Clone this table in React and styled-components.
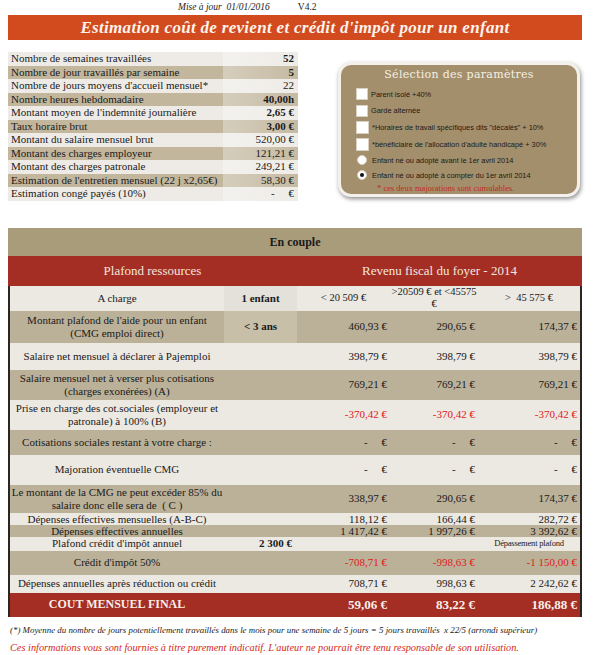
import React from "react";
import styled, { createGlobalStyle } from "styled-components";

const GlobalStyle = createGlobalStyle`
  body {
    margin: 0;
    background: #fff;
    font-family: "Liberation Serif", "Times New Roman", serif;
    color: #1a1a1a;
  }
`;

const leftRows = [
  ["Nombre de semaines travaillées", "52", true],
  ["Nombre de jour travaillés par semaine", "5", true],
  ["Nombre de jours moyens d'accueil mensuel*", "22"],
  ["Nombre heures hebdomadaire", "40,00h", true],
  ["Montant moyen de l'indemnité journalière", "2,65 €", true],
  ["Taux horaire brut", "3,00 €", true],
  ["Montant du salaire mensuel brut", "520,00 €"],
  ["Montant des charges employeur", "121,21 €"],
  ["Montant des charges patronale", "249,21 €"],
  ["Estimation de l'entretien mensuel (22 j x2,65€)", "58,30 €"],
  ["Estimation congé payés (10%)", "-     €"],
];

const options = [
  { type: "box", label: "Parent isolé +40%" },
  { type: "box", label: "Garde alternée" },
  { type: "box", label: "*Horaires de travail spécifiques dits \"décalés\" + 10%", big: true },
  { type: "box", label: "*bénéficiaire de l'allocation d'adulte handicapé + 30%", big: true },
  { type: "radio", label: "Enfant né ou adopté avant le 1er avril 2014" },
  { type: "radio", label: "Enfant né ou adopté à compter du 1er avril 2014", checked: true },
];

const dash = "-     €";

const rows = [
  { h: 32, tone: "tan", label: <>Montant plafond de l'aide pour un enfant<br />(CMG emploi direct)</>, extra: "< 3 ans", hl: true, values: ["460,93 €", "290,65 €", "174,37 €"] },
  { h: 27, tone: "light", label: "Salaire net mensuel à déclarer à Pajemploi", values: ["398,79 €", "398,79 €", "398,79 €"] },
  { h: 30, tone: "tan", label: <>Salaire mensuel net à verser plus cotisations<br />(charges exonérées) (A)</>, values: ["769,21 €", "769,21 €", "769,21 €"] },
  { h: 30, tone: "light", label: <>Prise en charge des cot.sociales (employeur et<br />patronale) à 100% (B)</>, values: ["-370,42 €", "-370,42 €", "-370,42 €"], red: true },
  { h: 25, tone: "tan", label: "Cotisations sociales restant à votre charge :", values: [dash, dash, dash] },
  { h: 30, tone: "light", label: "Majoration éventuelle CMG", values: [dash, dash, dash] },
  { h: 28, tone: "tan", label: <>Le montant de la CMG ne peut excéder 85% du<br />salaire donc elle sera de &nbsp;( C )</>, values: ["338,97 €", "290,65 €", "174,37 €"] },
  { h: 12, tone: "light", label: "Dépenses effectives mensuelles (A-B-C)", values: ["118,12 €", "166,44 €", "282,72 €"] },
  { h: 12, tone: "tan", label: "Dépenses effectives annuelles", values: ["1 417,42 €", "1 997,26 €", "3 392,62 €"] },
  { h: 14, tone: "light", label: "Plafond crédit d'impôt annuel", extra: "2 300 €", extraRight: true, values: ["", "", ""], note: "Dépassement plafond" },
  { h: 24, tone: "tan", label: "Crédit d'impôt 50%", values: ["-708,71 €", "-998,63 €", "-1 150,00 €"], red: true },
  { h: 18, tone: "light", label: "Dépenses annuelles après réduction ou crédit", values: ["708,71 €", "998,63 €", "2 242,62 €"] },
];

const App = () => {
  return (
    <Page>
      <GlobalStyle />
      <TopLine>
        <span>Mise à jour &nbsp;01/01/2016</span>
        <span>V4.2</span>
      </TopLine>
      <Banner>Estimation coût de revient et crédit d'impôt pour un enfant</Banner>

      <TopSection>
        <InfoTable>
          {leftRows.map(([label, value, bold], i) => (
            <InfoRow key={label} $tan={i % 2 === 1}>
              <InfoLabel>{label}</InfoLabel>
              <InfoValue $bold={bold}>{value}</InfoValue>
            </InfoRow>
          ))}
        </InfoTable>

        <Panel>
          <PanelTitle>Sélection des paramètres</PanelTitle>
          {options.map((o, i) => (
            <Option key={i} $h={i < 4 ? 17 : i === 4 ? 16 : 14}>
              {o.type === "box" ? <Box $big={o.big} /> : <Radio $checked={o.checked} />}
              <OptionLabel>{o.label}</OptionLabel>
            </Option>
          ))}
          <PanelNote>* ces deux majorations sont cumulables.</PanelNote>
        </Panel>
      </TopSection>

      <Table>
        <CoupleBar>En couple</CoupleBar>
        <HeadBand>
          <span>Plafond ressources</span>
          <span>Revenu fiscal du foyer - 2014</span>
        </HeadBand>
        <Body>
          <Row $h={25} $tone="light">
            <Label>A charge</Label>
            <Extra $hl $tone="light">1 enfant</Extra>
            <HeadCell>&lt; 20 509 €</HeadCell>
            <HeadCell>&gt;20509 € et &lt;45575<br />€</HeadCell>
            <HeadCell>&gt; &nbsp;45 575 €</HeadCell>
          </Row>
          {rows.map((r, i) => (
            <Row key={i} $h={r.h} $tone={r.tone}>
              <Label>{r.label}</Label>
              <Extra $hl={r.hl} $tone={r.tone} $right={r.extraRight}>{r.extra}</Extra>
              <Value $red={r.red}>{r.values[0]}</Value>
              <Value $red={r.red}>{r.values[1]}</Value>
              {r.note ? <Note>{r.note}</Note> : <Value $red={r.red}>{r.values[2]}</Value>}
            </Row>
          ))}
          <FinalRow>
            <FinalLabel>COUT MENSUEL FINAL</FinalLabel>
            <span />
            <FinalValue>59,06 €</FinalValue>
            <FinalValue>83,22 €</FinalValue>
            <FinalValue>186,88 €</FinalValue>
          </FinalRow>
        </Body>
      </Table>

      <Footnote>
        (*) Moyenne du nombre de jours potentiellement travaillés dans le mois pour une semaine de 5 jours = 5 jours travaillés &nbsp;x 22/5 (arrondi supérieur)
      </Footnote>
      <Disclaimer>
        Ces informations vous sont fournies à titre purement indicatif. L'auteur ne pourrait être tenu responsable de son utilisation.
      </Disclaimer>
    </Page>
  );
};

export default App;

const Page = styled.div`
  width: 574px;
  padding: 0 8px;
`;

const TopLine = styled.div`
  height: 15px;
  display: flex;
  gap: 28px;
  padding-left: 170px;
  font-size: 9.5px;
  font-style: italic;
  line-height: 15px;

  span:last-child {
    font-style: normal;
  }
`;

const Banner = styled.div`
  height: 25px;
  background: #d24b1f;
  color: #fbf3ec;
  font-family: "Liberation Serif", serif;
  font-style: italic;
  font-weight: 700;
  font-size: 17px;
  letter-spacing: 0.3px;
  line-height: 25px;
  text-align: center;
`;

const TopSection = styled.div`
  display: flex;
  align-items: flex-start;
  gap: 40px;
  margin-top: 12px;
`;

const InfoTable = styled.div`
  width: 290px;
`;

const InfoRow = styled.div`
  display: grid;
  grid-template-columns: 215px 75px;
  height: 13.5px;
  line-height: 13.5px;
  font-size: 11px;
  background: ${({ $tan }) => ($tan ? "#c2b69d" : "#eeebe6")};
`;

const InfoLabel = styled.div`
  padding-left: 3px;
  white-space: nowrap;
  overflow: hidden;
`;

const InfoValue = styled.div`
  text-align: right;
  padding-right: 4px;
  white-space: pre;
  font-weight: ${({ $bold }) => ($bold ? 700 : 400)};
  background: linear-gradient(to right, rgba(255, 255, 255, 0.32), rgba(255, 255, 255, 0.06));
`;

const Panel = styled.div`
  margin-top: 10px;
  width: 236px;
  height: 129px;
  background: #a38f6c;
  border: 3px solid #f4f1ec;
  border-radius: 13px;
  box-shadow: 1px 2px 4px rgba(0, 0, 0, 0.45);
  display: flex;
  flex-direction: column;
`;

const PanelTitle = styled.div`
  height: 21px;
  line-height: 20px;
  text-align: center;
  color: #f5efe4;
  font-family: "DejaVu Serif", serif;
  font-size: 11px;
  letter-spacing: 0.3px;
`;

const Option = styled.div`
  height: ${({ $h }) => $h}px;
  display: flex;
  align-items: center;
  gap: 3px;
  padding-left: 15px;
`;

const Box = styled.span`
  width: ${({ $big }) => ($big ? 11 : 10)}px;
  height: ${({ $big }) => ($big ? 11 : 10)}px;
  background: #fff;
  border: 1px solid #d8d0c0;
  flex-shrink: 0;
`;

const Radio = styled.span`
  width: 8px;
  height: 8px;
  border-radius: 50%;
  background: #fff;
  border: 1px solid #d8d0c0;
  margin-left: 1px;
  margin-right: 2px;
  flex-shrink: 0;
  position: relative;

  &::after {
    content: "";
    display: ${({ $checked }) => ($checked ? "block" : "none")};
    position: absolute;
    left: 2px;
    top: 2px;
    width: 4px;
    height: 4px;
    border-radius: 50%;
    background: #111;
  }
`;

const OptionLabel = styled.span`
  font-family: "Liberation Sans", Arial, sans-serif;
  font-size: 7.4px;
  color: #1d1a14;
  white-space: nowrap;
`;

const PanelNote = styled.div`
  height: 12px;
  line-height: 12px;
  padding-left: 36px;
  font-size: 8.5px;
  color: #c32a1e;
`;

const Table = styled.div`
  margin-top: 27px;
  width: 574px;
`;

const CoupleBar = styled.div`
  height: 28px;
  line-height: 28px;
  background: #a99c7b;
  text-align: center;
  font-weight: 700;
  font-size: 12px;
`;

const HeadBand = styled.div`
  height: 30px;
  display: grid;
  grid-template-columns: 289px 285px;
  align-items: center;
  background: #a42e24;
  color: #f3e6df;
  font-size: 13px;
  text-align: center;
`;

const Body = styled.div`
  border-left: 2px solid #2b2621;
  border-right: 2px solid #2b2621;
`;

const Row = styled.div`
  display: grid;
  grid-template-columns: 214px 73px 93px 88px 102px;
  height: ${({ $h }) => $h}px;
  align-items: center;
  font-size: 11px;
  line-height: 12.5px;
  background: ${({ $tone }) => ($tone === "tan" ? "#bbb199" : "#ece8e2")};
`;

const Label = styled.div`
  text-align: center;
  white-space: nowrap;
`;

const Extra = styled.div`
  align-self: stretch;
  display: flex;
  align-items: center;
  justify-content: ${({ $right }) => ($right ? "flex-end" : "center")};
  padding-right: ${({ $right }) => ($right ? "5px" : "0")};
  font-weight: 700;
  background: ${({ $hl, $tone }) =>
    $hl ? ($tone === "tan" ? "#c8bfa9" : "#e4e0da") : "transparent"};
`;

const HeadCell = styled.div`
  text-align: center;
  font-size: 10.5px;
  line-height: 12px;
`;

const Value = styled.div`
  text-align: right;
  padding-right: 3px;
  white-space: pre;
  color: ${({ $red }) => ($red ? "#e0201b" : "inherit")};
`;

const Note = styled.div`
  text-align: center;
  font-size: 8.5px;
  letter-spacing: -0.2px;
`;

const FinalRow = styled.div`
  display: grid;
  grid-template-columns: 214px 73px 93px 88px 102px;
  height: 24px;
  align-items: center;
  background: #a42e24;
  color: #f8efe9;
  font-weight: 700;
`;

const FinalLabel = styled.div`
  text-align: center;
  font-size: 12px;
`;

const FinalValue = styled.div`
  text-align: right;
  padding-right: 3px;
  font-size: 13px;
`;

const Footnote = styled.div`
  margin-top: 8px;
  padding-left: 2px;
  font-size: 8.9px;
  font-style: italic;
  white-space: nowrap;
  line-height: 10px;
`;

const Disclaimer = styled.div`
  margin-top: 7px;
  padding-left: 2px;
  font-size: 10.3px;
  font-style: italic;
  color: #d42a20;
  white-space: nowrap;
`;
